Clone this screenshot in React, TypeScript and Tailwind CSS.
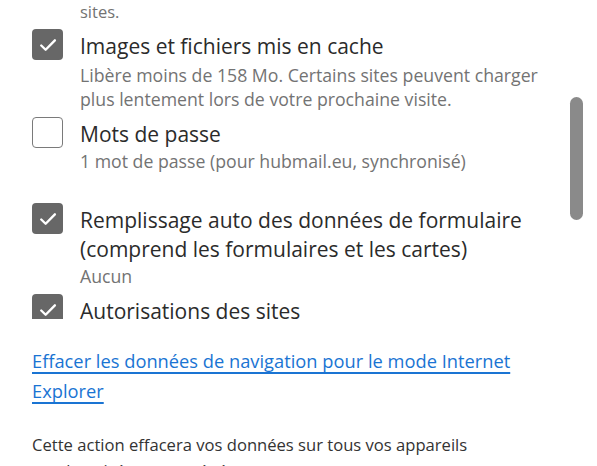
import type { ReactElement, ReactNode } from 'react';

function Check({ checked }: { checked: boolean }): ReactElement {
  if (!checked) {
    return (
      <div className="w-[31px] h-[31px] shrink-0 rounded-[4px] border-[1.5px] border-[#7a7a7a] bg-white" />
    );
  }
  return (
    <div className="w-[31px] h-[31px] shrink-0 rounded-[4px] bg-[#676767] flex items-center justify-center">
      <svg width="20" height="20" viewBox="0 0 16 16" fill="none">
        <path
          d="M2.6 8.4 L6.1 11.8 L13.5 4.3"
          stroke="white"
          strokeWidth="1.9"
          strokeLinecap="round"
          strokeLinejoin="round"
        />
      </svg>
    </div>
  );
}

function Row({
  checked,
  title,
  children,
  className,
}: {
  checked: boolean;
  title: ReactNode;
  children?: ReactNode;
  className?: string;
}): ReactElement {
  return (
    <div className={`flex gap-[17px] ${className ?? ''}`}>
      <Check checked={checked} />
      <div className="flex flex-col pt-[3px]">
        <div className="text-[21px] leading-[29px] font-medium text-[#2b2b2b] whitespace-nowrap">
          {title}
        </div>
        {children && (
          <div className="text-[17.7px] leading-[24px] text-[#737373] whitespace-nowrap">
            {children}
          </div>
        )}
      </div>
    </div>
  );
}

export default function App(): ReactElement {
  return (
    <div
      className="w-[597px] h-[466px] bg-white overflow-hidden flex flex-col"
      style={{ fontFamily: '"Open Sans", "Noto Sans", sans-serif' }}
    >
      <div className="h-[319px] shrink-0 overflow-hidden flex">
        <div className="flex-1 flex flex-col pl-[32px]">
          <div className="pl-[48px] text-[16.5px] leading-[24px] text-[#737373]">sites.</div>
          <Row checked title="Images et fichiers mis en cache" className="mt-[5px]">
            <div className="pt-[2px]">
              Libère moins de 158 Mo. Certains sites peuvent charger
              <br />
              plus lentement lors de votre prochaine visite.
            </div>
          </Row>
          <Row checked={false} title="Mots de passe" className="mt-[6px]">
            1 mot de passe (pour hubmail.eu, synchronisé)
          </Row>
          <Row
            checked
            title={
              <>
                Remplissage auto des données de formulaire
                <br />
                (comprend les formulaires et les cartes)
              </>
            }
            className="mt-[30px]"
          >
            Aucun
          </Row>
          <Row checked title="Autorisations des sites" className="mt-[6px]" />
        </div>
        <div className="w-[13px] mr-[14px] pt-[97px]">
          <div className="h-[123px] rounded-full bg-[#8a8a8a]" />
        </div>
      </div>

      <div className="pl-[32px] pt-[27px]">
        <a
          href="#"
          className="text-[18.3px] leading-[30px] font-medium text-[#1a74d3] underline underline-offset-[4px] decoration-[1.5px]"
        >
          Effacer les données de navigation pour le mode Internet
          <br />
          Explorer
        </a>
        <p className="mt-[26px] text-[16.6px] leading-[26px] text-[#333333]">
          Cette action effacera vos données sur tous vos appareils
          <br />
          synchronisés connectés à votre compte.
        </p>
      </div>
    </div>
  );
}
